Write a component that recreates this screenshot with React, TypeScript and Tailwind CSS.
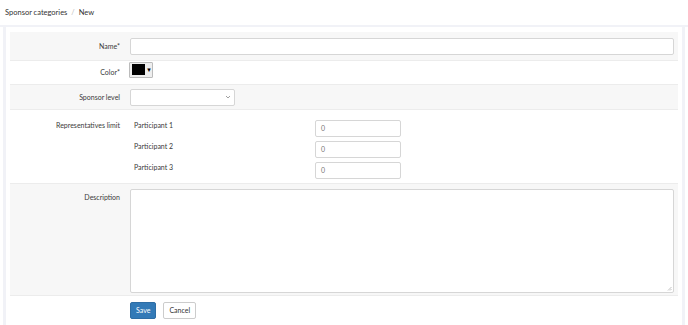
import React from "react";

const font = { fontFamily: 'Lato, "Open Sans", "Liberation Sans", sans-serif' };

function Label({ children }: { children: React.ReactNode }) {
  return <div className="w-[120px] shrink-0 pr-[10px] text-right text-[7px] text-[#3a3a3a]">{children}</div>;
}

export default function App() {
  return (
    <div className="w-[688px] h-[325px] bg-white overflow-hidden text-[#333]" style={font}>
      <div className="h-[25px] flex items-center pl-[5px] text-[7.5px] text-[#333]">
        <span>Sponsor categories</span>
        <span className="mx-[4px] text-[#bbb]">/</span>
        <span>New</span>
      </div>
      <div className="border-t-2 border-[#f1f2f7]">
        <div className="mx-[3px] border-x-[3px] border-[#f1f2f7] px-[4px] pt-[5px] h-[310px]">
          {/* Name */}
          <div className="flex items-center h-[29px] bg-[#f7f7f7] border-b border-[#ececec]">
            <Label>Name*</Label>
            <div className="flex-1 pr-[4px]">
              <div className="h-[17px] bg-white border border-[#d6d6d6] rounded-[2px]" />
            </div>
          </div>
          {/* Color */}
          <div className="flex items-center h-[24px] bg-white border-b border-[#ececec]">
            <Label>Color*</Label>
            <div className="w-[24px] h-[16px] -ml-[1px] border border-[#bbb] bg-[#eee] flex items-center pl-[2px] gap-[1px] rounded-[1px] -mt-[6px]">
              <div className="w-[13px] h-[11px] bg-black" />
              <span className="text-[6px] leading-none text-black">▼</span>
            </div>
          </div>
          {/* Sponsor level */}
          <div className="flex items-center h-[25px] bg-[#f7f7f7] border-b border-[#ececec]">
            <Label>Sponsor level</Label>
            <div className="w-[105px] h-[17px] bg-white border border-[#d6d6d6] rounded-[2px] flex items-center justify-end pr-[3px]">
              <svg width="6" height="4" viewBox="0 0 6 4"><path d="M1 1 L3 3 L5 1" stroke="#888" strokeWidth="0.8" fill="none" /></svg>
            </div>
          </div>
          {/* Representatives */}
          <div className="flex h-[74px] bg-white border-b border-[#ececec] pt-[10px]">
            <Label>Representatives limit</Label>
            <div className="flex flex-col gap-[4px]">
              {[1, 2, 3].map((n) => (
                <div key={n} className="flex items-start h-[17px]">
                  <div className="w-[185px] pl-[4px] text-[7px] text-[#3a3a3a] leading-[10px]">Participant {n}</div>
                  <div className="w-[86px] h-[17px] bg-white border border-[#d6d6d6] rounded-[2px] flex items-center pl-[5px] text-[7px] text-[#777]">0</div>
                </div>
              ))}
            </div>
          </div>
          {/* Description */}
          <div className="flex h-[112px] bg-[#f7f7f7] border-b border-[#ececec] pt-[5px]">
            <div className="pt-[3px]"><Label>Description</Label></div>
            <div className="flex-1 pr-[4px]">
              <div className="relative h-[104px] bg-white border border-[#d6d6d6] rounded-[2px]">
                <svg className="absolute right-[1px] bottom-[1px]" width="5" height="5" viewBox="0 0 5 5"><path d="M4.5 1 L1 4.5 M4.5 3 L3 4.5" stroke="#999" strokeWidth="0.6" /></svg>
              </div>
            </div>
          </div>
          {/* Buttons */}
          <div className="flex items-center gap-[7px] pl-[120px] pt-[6px]">
            <div className="h-[17px] px-[5px] bg-[#337ab7] border border-[#2e6da4] rounded-[2px] text-white text-[7px] flex items-center">Save</div>
            <div className="h-[17px] px-[5px] bg-white border border-[#ccc] rounded-[2px] text-[#333] text-[7px] flex items-center">Cancel</div>
          </div>
        </div>
      </div>
    </div>
  );
}
